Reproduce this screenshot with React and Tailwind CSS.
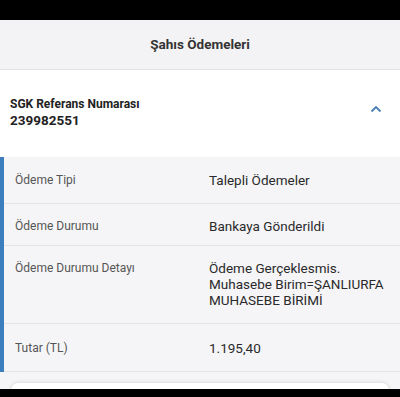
export default function App() {
  const rows = [
    { label: "Ödeme Tipi", value: ["Talepli Ödemeler"], cls: "pt-[15px] pb-[15px]" },
    { label: "Ödeme Durumu", value: ["Bankaya Gönderildi"], cls: "pt-[14px] pb-[11px]" },
    {
      label: "Ödeme Durumu Detayı",
      value: ["Ödeme Gerçeklesmis.", "Muhasebe Birim=ŞANLIURFA", "MUHASEBE BİRİMİ"],
      cls: "pt-[14px] pb-[15px]",
    },
    { label: "Tutar (TL)", value: ["1.195,40"], cls: "pt-[16px] pb-[15px]" },
  ];
  return (
    <div className="w-[400px] h-[397px] overflow-hidden bg-black flex flex-col" style={{ fontFamily: "Roboto, 'Noto Sans', sans-serif" }}>
      <div className="h-[20px] shrink-0 bg-black" />
      <div className="h-[50px] shrink-0 bg-[#f3f3f5] border-b border-[#e2e2e6] flex items-center justify-center">
        <span className="text-[13.5px] font-bold text-[#333]">Şahıs Ödemeleri</span>
      </div>
      <div className="h-[87px] shrink-0 bg-white flex items-start justify-between pl-[10px] pr-[18px] pt-[27px]">
        <div className="flex flex-col">
          <span className="text-[12px] font-bold text-[#222] leading-[15px]">SGK Referans Numarası</span>
          <span className="text-[13.5px] font-bold text-[#222] leading-[17px]">239982551</span>
        </div>
        <svg width="12" height="8" viewBox="0 0 12 8" className="mt-[8px]">
          <path d="M1.5 6.5 L6 2 L10.5 6.5" fill="none" stroke="#4a7fb5" strokeWidth="1.8" />
        </svg>
      </div>
      <div className="shrink-0 bg-[#f5f5f7] border-l-[4px] border-[#3d7ebf] flex flex-col">
        {rows.map((r, i) => (
          <div key={i} className={`flex border-b border-[#e4e4e8] ${r.cls}`}>
            <div className="w-[205px] pl-[11px] text-[12px] leading-[16px] text-[#555]">{r.label}</div>
            <div className="flex flex-col text-[13.5px] leading-[16px] text-[#2a2a2a]">
              {r.value.map((v, j) => (
                <span key={j}>{v}</span>
              ))}
            </div>
          </div>
        ))}
      </div>
      <div className="h-[17px] shrink-0 bg-[#f5f5f7] px-[10px] pt-[10px]">
        <div className="h-[20px] bg-white rounded-t-[8px] border border-[#e4e4e8] shadow-[0_-1px_3px_rgba(0,0,0,0.06)]" />
      </div>
      <div className="flex-1 bg-black" />
    </div>
  );
}
